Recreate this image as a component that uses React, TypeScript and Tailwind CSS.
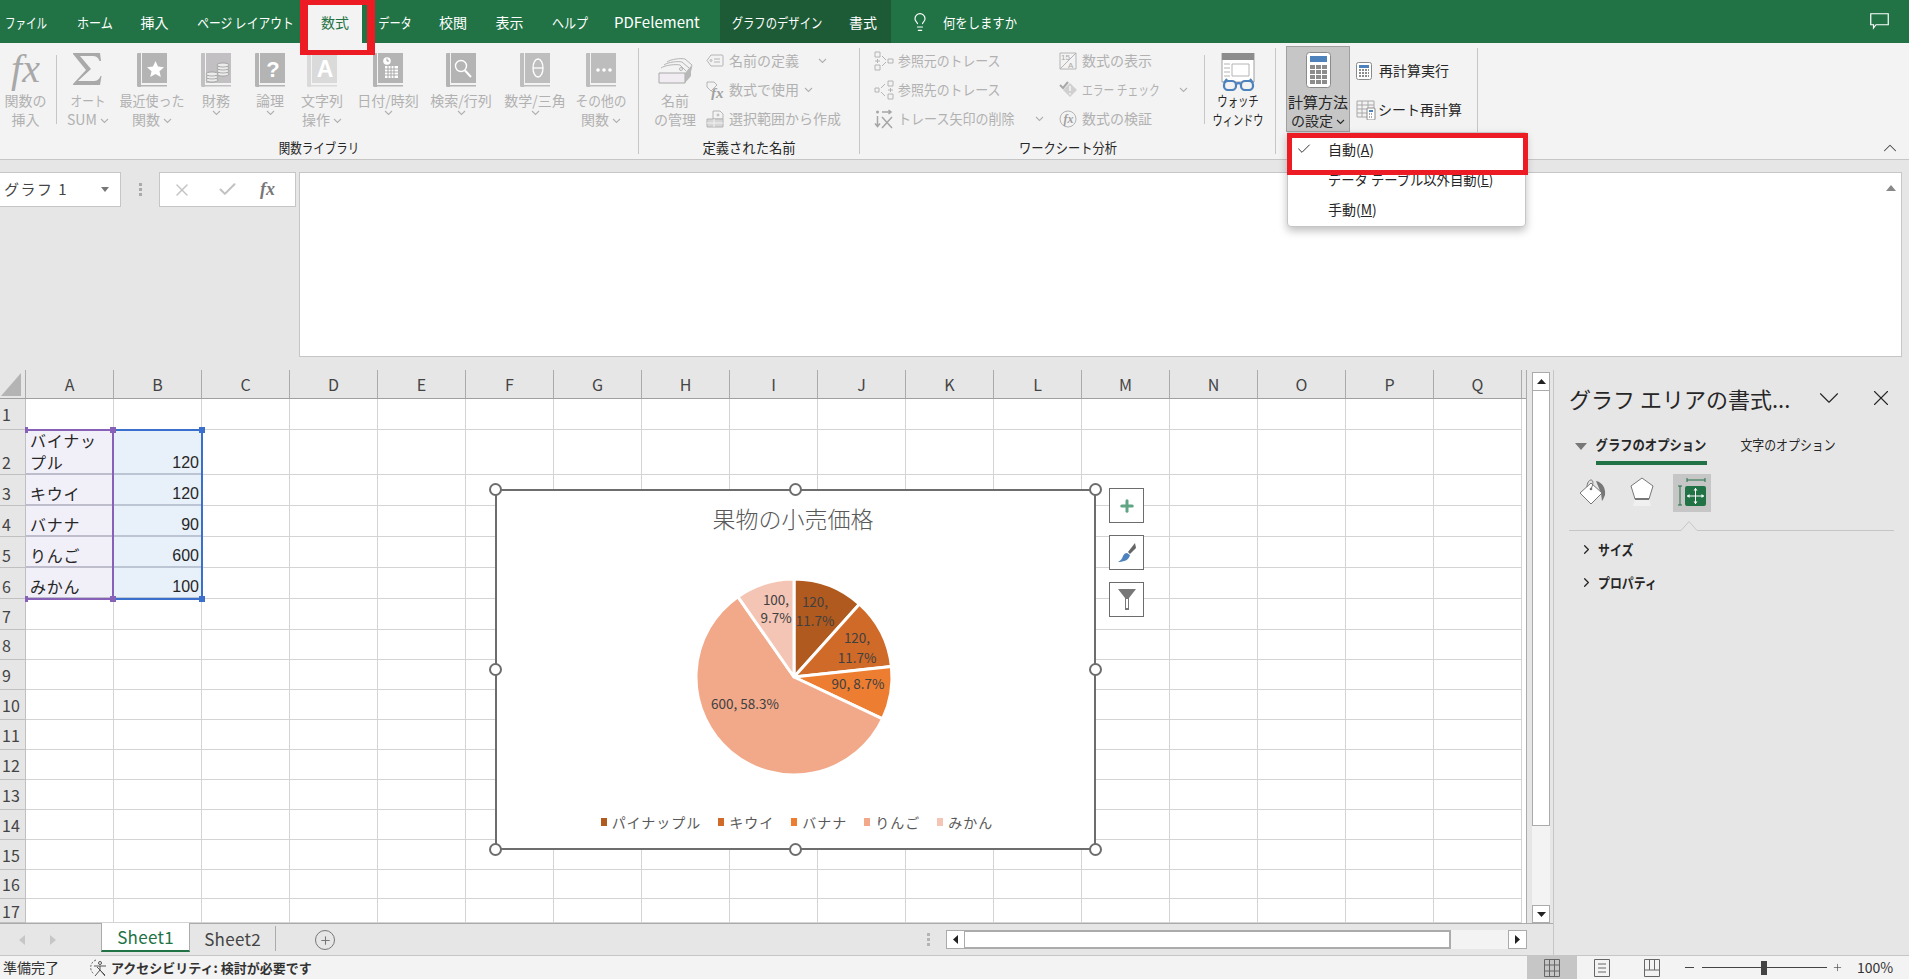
import { Check, ChevronDown, ChevronRight, ChevronUp, Lightbulb, Plus, X } from 'lucide-react';
import type { ReactNode } from 'react';

const MUTED = 'text-[#b1b1b1]';

// little chevron used under the ribbon buttons
function Chev({ className = '' }: { className?: string }) {
  return (
    <svg width="9" height="6" viewBox="0 0 9 6" className={`inline-block align-middle ${className}`}>
      <path d="M1 1l3.5 3.5L8 1" fill="none" stroke="currentColor" strokeWidth="1.1" />
    </svg>
  );
}

function N({ className = '', children }: { className?: string; children: ReactNode }) {
  return <span className={`inline-block whitespace-nowrap ${className}`}>{children}</span>;
}

function Book({ children, body = '#b4b4b4' }: { children?: ReactNode; body?: string }) {
  return (
    <svg width="31" height="34" viewBox="0 0 31 34">
      <path d="M0 31V1a1 1 0 0 1 1-1h3v34H2a2 2 0 0 1-2-3z" fill={body} />
      <rect x="5" y="0" width="25" height="30" fill={body} />
      <rect x="2" y="32" width="28" height="1.500" fill={body} />
      {children}
    </svg>
  );
}

const iconBooks: Record<string, ReactNode> = {
  star: (
    <Book>
      <path d="M18.500 8l2.500 5.600 6 .6-4.500 4 1.300 5.800-5.300-3-5.300 3 1.300-5.800-4.500-4 6-.6z" fill="#fff" />
    </Book>
  ),
  coins: (
    <Book body="#c2c0c2">
      <g fill="#ececec" stroke="#8f8f8f" strokeWidth="0.7">
        <ellipse cx="22" cy="21" rx="6" ry="2" />
        <ellipse cx="22" cy="18" rx="6" ry="2" />
        <ellipse cx="22" cy="15" rx="6" ry="2" />
        <ellipse cx="22" cy="12" rx="6" ry="2" />
        <ellipse cx="11" cy="27" rx="6" ry="2" />
        <ellipse cx="11" cy="24" rx="6" ry="2" />
        <ellipse cx="11" cy="21" rx="6" ry="2" />
      </g>
    </Book>
  ),
  question: (
    <Book>
      <text x="18" y="24" textAnchor="middle" fontSize="22" fontWeight="700" fill="#fff" fontFamily="Liberation Sans">?</text>
    </Book>
  ),
  letter: (
    <Book body="#dadada">
      <text x="18" y="24" textAnchor="middle" fontSize="23" fontWeight="700" fill="#fff" fontFamily="Liberation Sans">A</text>
    </Book>
  ),
  date: (
    <Book>
      <circle cx="14" cy="8" r="3.800" fill="#fff" />
      <path d="M14 5.500V8h2" stroke="#888" fill="none" strokeWidth="0.8" />
      <rect x="12" y="13" width="13" height="12" fill="#fff" />
      <path d="M12 16h13M12 19h13M12 22h13M15 13v12M18 13v12M21 13v12" stroke="#a0a0a0" strokeWidth="0.9" />
    </Book>
  ),
  search: (
    <Book>
      <circle cx="15" cy="13" r="5.500" fill="#b4b4b4" stroke="#fff" strokeWidth="1.400" />
      <path d="M19 17.500l6 6.500" stroke="#fff" strokeWidth="2" />
    </Book>
  ),
  theta: (
    <Book body="#bebebe">
      <ellipse cx="18" cy="15" rx="5" ry="9" fill="none" stroke="#fff" strokeWidth="1.300" />
      <path d="M13 15h10" stroke="#fff" strokeWidth="1.300" />
    </Book>
  ),
  more: (
    <Book body="#bdbdbd">
      <circle cx="12" cy="17" r="1.800" fill="#fff" />
      <circle cx="18" cy="17" r="1.800" fill="#fff" />
      <circle cx="24" cy="17" r="1.800" fill="#fff" />
    </Book>
  ),
};

function BigButton({ className, icon, children }: { className: string; icon: ReactNode; children: ReactNode }) {
  return (
    <div className={`flex flex-col items-center ${className}`}>
      <div className="flex h-[48px] justify-center pt-[10px]">{icon}</div>
      <div className={`flex flex-col items-center text-[14px] leading-[19px] ${MUTED}`}>{children}</div>
    </div>
  );
}

function SmallRow({ icon, iconClass, children }: { icon: ReactNode; iconClass: string; children: ReactNode }) {
  return (
    <div className={`flex h-[29px] items-center text-[14px] ${MUTED}`}>
      <div className={`flex shrink-0 items-center ${iconClass}`}>{icon}</div>
      {children}
    </div>
  );
}

function SmallGlyph({ children, w = 18 }: { children: ReactNode; w?: number }) {
  return (
    <svg width={w} height="20" viewBox={`0 0 ${w} 20`} fill="none" stroke="#b4b4b4" strokeWidth="1">
      {children}
    </svg>
  );
}

function GroupLabel({ children }: { children: ReactNode }) {
  return <div className="flex h-[18px] items-center justify-center text-[14px] text-[#262626]">{children}</div>;
}

function RibbonSep({ className = '' }: { className?: string }) {
  return <div className={`w-px shrink-0 bg-[#c6c6c6] ${className}`} />;
}

const GroupSep = () => <RibbonSep className="mt-[5px] h-[106px]" />;

const tabs = [
  { label: 'ファイル', box: 'ml-[5px] w-[42px]', scale: 'scale-x-[0.75]' },
  { label: 'ホーム', box: 'ml-[30px] w-[36px]', scale: 'scale-x-[0.86]' },
  { label: '挿入', box: 'ml-[27px] w-[29px]', scale: '' },
  { label: 'ページ レイアウト', box: 'ml-[28px] w-[97px]', scale: 'scale-x-[0.84]' },
];
const tabsAfter = [
  { label: 'データ', box: 'ml-[16px] w-[33px]', scale: 'scale-x-[0.8]' },
  { label: '校閲', box: 'ml-[28px] w-[28px]', scale: '' },
  { label: '表示', box: 'ml-[28px] w-[29px]', scale: '' },
  { label: 'ヘルプ', box: 'ml-[28px] w-[36px]', scale: 'scale-x-[0.86]' },
];

function TitleBar() {
  const tab = (t: { label: string; box: string; scale: string }) => (
    <div key={t.label} className={`mt-[2px] flex justify-center ${t.box}`}>
      <N className={t.scale}>{t.label}</N>
    </div>
  );
  return (
    <div className="flex h-[43px] items-center bg-[#217346] text-[14px] text-white">
      {tabs.map(tab)}
      <div className="ml-[14px] mt-[5px] flex h-[38px] w-[54px] items-center justify-center bg-[#f3f3f3] pb-[3px] text-[#217346]">
        数式
      </div>
      {tabsAfter.map(tab)}
      <div className="ml-[26px] mt-[2px] w-[89px] text-[15px]">PDFelement</div>
      <div className="ml-[17px] flex h-full w-[171px] items-center bg-[#1d5b36] pl-[11px] pt-[2px]">
        <div className="flex w-[91px] justify-center">
          <N className="scale-x-[0.81]">グラフのデザイン</N>
        </div>
        <div className="ml-[27px]">書式</div>
      </div>
      <Lightbulb size={20} strokeWidth={1.4} className="ml-[19px]" />
      <div className="ml-[13px] mt-[2px] flex w-[74px] justify-center">
        <N className="scale-x-[0.88]">何をしますか</N>
      </div>
      <svg width="19" height="17" viewBox="0 0 19 17" fill="none" className="ml-auto mr-[20px]">
        <path d="M.75.75h17.500v11H6L3.500 15v-3.250H.75z" stroke="#fff" strokeWidth="1.200" />
      </svg>
    </div>
  );
}

function Ribbon() {
  return (
    <div className="flex h-[117px] border-b border-[#c6c6c6] bg-[#f3f3f3]">
      {/* 関数ライブラリ */}
      <div className="flex w-[638px] shrink-0 flex-col">
        <div className="flex h-[95px]">
          <BigButton
            className="w-[51px]"
            icon={<span className="font-['Liberation_Serif',serif] text-[40px] italic leading-[32px] text-[#a8a8a8]">fx</span>}
          >
            <span>関数の</span>
            <span>挿入</span>
          </BigButton>
          <RibbonSep className="ml-[5px] mt-[12px] h-[69px]" />
          <BigButton
            className="w-[62px]"
            icon={
              <svg width="30" height="33" viewBox="0 0 30 33">
                <path d="M0 0h27l1 8h-1.500C25 4 23 3 19 3H7l11 13L5 28h15c4 0 6-1 7.500-5h1L27 32H0v-1l13-14L0 1z" fill="#a9a9a9" />
              </svg>
            }
          >
            <N className="scale-x-[0.83]">オート</N>
            <span>
              SUM <Chev />
            </span>
          </BigButton>
          <BigButton className="w-[66px]" icon={iconBooks.star}>
            <N className="scale-x-[0.93]">最近使った</N>
            <span>
              関数 <Chev />
            </span>
          </BigButton>
          <BigButton className="w-[62px]" icon={iconBooks.coins}>
            <span>財務</span>
            <Chev />
          </BigButton>
          <BigButton className="w-[46px]" icon={iconBooks.question}>
            <span>論理</span>
            <Chev />
          </BigButton>
          <BigButton className="w-[58px]" icon={iconBooks.letter}>
            <span>文字列</span>
            <span>
              操作 <Chev />
            </span>
          </BigButton>
          <BigButton className="w-[74px]" icon={iconBooks.date}>
            <span>日付/時刻</span>
            <Chev />
          </BigButton>
          <BigButton className="w-[72px]" icon={iconBooks.search}>
            <span>検索/行列</span>
            <Chev />
          </BigButton>
          <BigButton className="w-[76px]" icon={iconBooks.theta}>
            <span>数学/三角</span>
            <Chev />
          </BigButton>
          <BigButton className="w-[56px]" icon={iconBooks.more}>
            <N className="scale-x-[0.91]">その他の</N>
            <span>
              関数 <Chev />
            </span>
          </BigButton>
        </div>
        <GroupLabel>
          <N className="scale-x-[0.82]">関数ライブラリ</N>
        </GroupLabel>
      </div>
      <GroupSep />

      {/* 定義された名前 */}
      <div className="flex w-[220px] shrink-0 flex-col">
        <div className="flex h-[95px]">
          <BigButton
            className="ml-[5px] w-[62px]"
            icon={
              <svg width="35" height="26" viewBox="0 0 35 26" fill="none" stroke="#b4b4b4" className="mt-[5px]">
                <path d="M9 4c4-3 14-4 18-3l7 6-2 9" />
                <path d="M6 7c4-3 14-4 18-3l7 6" />
                <path d="M3 10c4-3 15-4 19-3l6 6" />
                <circle cx="23" cy="11" r="1.500" />
                <path d="M1 15h26v10H1z" fill="#f0ecf2" stroke="#a8a8a8" />
                <path d="M27 15l6-7v10l-6 7z" fill="#b8b8b8" stroke="none" />
              </svg>
            }
          >
            <span>名前</span>
            <span>の管理</span>
          </BigButton>
          <div className="flex flex-col pt-[3px]">
            <SmallRow
              iconClass="w-[23px]"
              icon={
                <SmallGlyph>
                  <path d="M5 4h11a1 1 0 0 1 1 1v9a1 1 0 0 1-1 1H5L1 9.500z" />
                  <circle cx="5" cy="9.500" r="1" />
                  <path d="M8 8h6M8 11h6" />
                </SmallGlyph>
              }
            >
              <span>名前の定義</span>
              <Chev className="ml-[19px]" />
            </SmallRow>
            <SmallRow
              iconClass="w-[23px]"
              icon={
                <SmallGlyph>
                  <path d="M1 2h7l3 3-6 6-4-4z" />
                  <text x="5" y="18" fontSize="15" fontStyle="italic" fontWeight="700" fill="#a0a0a0" stroke="none" fontFamily="Liberation Serif">fx</text>
                </SmallGlyph>
              }
            >
              <span>数式で使用</span>
              <Chev className="ml-[5px]" />
            </SmallRow>
            <SmallRow
              iconClass="w-[23px]"
              icon={
                <SmallGlyph>
                  <path d="M7 2h7l3 3v5H7z" />
                  <circle cx="12" cy="6" r="1" />
                  <path d="M1 10h16v8H1z" fill="#d6d6d6" />
                  <path d="M8 10v8M1 14h16" stroke="#f3f3f3" />
                </SmallGlyph>
              }
            >
              <span>選択範囲から作成</span>
            </SmallRow>
          </div>
        </div>
        <GroupLabel>
          <N className="scale-x-[0.95]">定義された名前</N>
        </GroupLabel>
      </div>
      <GroupSep />

      {/* ワークシート分析 */}
      <div className="flex w-[415px] shrink-0 flex-col">
        <div className="flex h-[95px]">
          <div className="ml-[14px] flex w-[185px] flex-col pt-[3px]">
            <SmallRow
              iconClass="w-[24px]"
              icon={
                <SmallGlyph w={20}>
                  <path d="M1 1h5v5H1zM1 14h5v5H1zM1 10h5M3.500 8v4M14 8h5v4h-5zM8 5l4 4M8 15l4-4" />
                </SmallGlyph>
              }
            >
              <N className="origin-left scale-x-[0.92]">参照元のトレース</N>
            </SmallRow>
            <SmallRow
              iconClass="w-[24px]"
              icon={
                <SmallGlyph w={20}>
                  <path d="M1 8h4v4H1zM14 1h5v5h-5zM14 14h5v5h-5zM14 10h5M16.500 8v4M7 8l4-4M7 12l4 4" />
                </SmallGlyph>
              }
            >
              <N className="origin-left scale-x-[0.92]">参照先のトレース</N>
            </SmallRow>
            <SmallRow
              iconClass="w-[24px]"
              icon={
                <svg width="20" height="20" viewBox="0 0 20 20" fill="none" stroke="#a6a6a6" strokeWidth="1.500">
                  <circle cx="3.500" cy="3" r="1.500" fill="#a6a6a6" stroke="none" />
                  <path d="M3.500 7v10M1 14.500l2.500 3 2.500-3M8 3h9M14.500 1l2.500 2-2.500 2M8 8l10 11M18 8L8 19" />
                </svg>
              }
            >
              <N className="origin-left scale-x-[0.93]">トレース矢印の削除</N>
              <Chev className="ml-[12px]" />
            </SmallRow>
          </div>
          <div className="flex w-[145px] flex-col pt-[3px]">
            <SmallRow
              iconClass="w-[23px]"
              icon={
                <SmallGlyph>
                  <path d="M1 2h16v16H1zM1 18L17 2" />
                  <text x="2" y="9" fontSize="8" fill="#a8a8a8" stroke="none" fontFamily="Liberation Sans">15</text>
                  <text x="9" y="17" fontSize="8" fill="#a8a8a8" stroke="none" fontFamily="Liberation Sans">A</text>
                </SmallGlyph>
              }
            >
              <span>数式の表示</span>
            </SmallRow>
            <SmallRow
              iconClass="w-[23px]"
              icon={
                <SmallGlyph>
                  <path d="M1 5l3 3 5-6" stroke="#a8a8a8" strokeWidth="2" />
                  <path d="M11 3l7 7-7 7-7-7z" fill="#d0d0d0" stroke="none" />
                  <path d="M11 6v5M11 13v1.500" stroke="#f3f3f3" strokeWidth="1.600" />
                </SmallGlyph>
              }
            >
              <N className="w-[78px] origin-left scale-x-[0.77]">エラー チェック</N>
              <Chev className="ml-[19px]" />
            </SmallRow>
            <SmallRow
              iconClass="w-[23px]"
              icon={
                <SmallGlyph>
                  <circle cx="9" cy="10" r="8" />
                  <text x="4.500" y="14" fontSize="12" fontStyle="italic" fontWeight="700" fill="#a0a0a0" stroke="none" fontFamily="Liberation Serif">fx</text>
                </SmallGlyph>
              }
            >
              <span>数式の検証</span>
            </SmallRow>
          </div>
          <RibbonSep className="mt-[12px] h-[69px]" />
          <div className="ml-[7px] flex w-[52px] flex-col items-center">
            <div className="flex h-[48px] justify-center pt-[10px]">
              <svg width="35" height="38" viewBox="0 0 35 38">
                <path d="M1 0h32v29H1z" fill="#fff" stroke="#a0a0a0" />
                <path d="M1 0h32v7H1z" fill="#8c8c8c" />
                <path d="M3 11h6M3 15h6M3 19h6M3 23h6" stroke="#b4b4b4" />
                <path d="M11 11h17v12H11z" fill="none" stroke="#b4b4b4" />
                <g fill="#f3f3f3" stroke="#4d82bd" strokeWidth="2.200">
                  <rect x="3" y="28" width="12" height="9" rx="4" />
                  <rect x="20" y="28" width="12" height="9" rx="4" />
                  <path d="M15 31c2-1.500 3-1.500 5 0M3 30l3-4M32 30l-3-4" fill="none" />
                </g>
              </svg>
            </div>
            <div className="flex flex-col items-center text-[14px] leading-[19px] text-[#262626]">
              <N className="scale-x-[0.74]">ウォッチ</N>
              <N className="scale-x-[0.73]">ウィンドウ</N>
            </div>
          </div>
        </div>
        <GroupLabel>
          <N className="scale-x-[0.875]">ワークシート分析</N>
        </GroupLabel>
      </div>
      <GroupSep />

      {/* 計算方法 */}
      <div className="flex w-[201px] shrink-0">
        <div className="ml-[10px] mt-[3px] flex h-[86px] w-[64px] flex-col items-center border border-[#a0a0a0] bg-[#c6c6c6] text-[14px] leading-[18px] text-[#262626]">
          <div className="flex h-[46px] justify-center pt-[5px]">
            <svg width="25" height="36" viewBox="0 0 25 36">
              <rect x="0.500" y="0.500" width="24" height="35" rx="3" fill="#fff" stroke="#8a8a8a" />
              <rect x="4" y="4" width="17" height="6" fill="#4d82bd" />
              <g fill="#8c8c8c">
                {[13, 18, 23, 28].map((y) => (
                  <g key={y}>
                    <rect x="4" y={y} width="5" height="4" />
                    <rect x="10" y={y} width="5" height="4" />
                    <rect x="16" y={y} width="5" height="4" />
                  </g>
                ))}
              </g>
            </svg>
          </div>
          <span className="whitespace-nowrap text-[15px]">計算方法</span>
          <span className="whitespace-nowrap">
            の設定 <Chev />
          </span>
        </div>
        <div className="ml-[6px] flex flex-col pt-[8px] text-[14px] text-[#262626]">
          <div className="flex h-[39px] items-center">
            <div className="w-[23px]">
              <svg width="16" height="18" viewBox="0 0 16 18">
                <rect x="0.500" y="0.500" width="15" height="17" rx="2" fill="#fff" stroke="#8a8a8a" />
                <rect x="3" y="3" width="10" height="3" fill="#4d82bd" />
                <path d="M3 8h10M3 11h10M3 14h10" stroke="#8c8c8c" strokeWidth="2" strokeDasharray="2 1" />
              </svg>
            </div>
            <span>再計算実行</span>
          </div>
          <div className="flex h-[39px] items-center">
            <div className="w-[23px]">
              <svg width="20" height="20" viewBox="0 0 20 20" fill="none">
                <path d="M1 1h17v16H1zM1 5h17M1 9h12M1 13h10M6 1v16M12 1v8" stroke="#a8a8a8" />
                <rect x="11" y="8" width="8" height="12" rx="1" fill="#fff" stroke="#8a8a8a" />
                <rect x="13" y="10" width="4" height="2" fill="#4d82bd" />
                <path d="M13 14h4M13 17h4" stroke="#8c8c8c" strokeWidth="1.500" strokeDasharray="1 1" />
              </svg>
            </div>
            <span className="-ml-[1px]">シート再計算</span>
          </div>
        </div>
      </div>
      <GroupSep />

      <div className="flex flex-1 items-end justify-end pb-[0px] pr-[8px]">
        <ChevronUp size={22} strokeWidth={1.1} className="text-[#444]" />
      </div>
    </div>
  );
}

function FormulaBar() {
  return (
    <div className="flex h-[210px] items-start bg-[#e6e6e6] pt-[12px]">
      <div className="flex h-[35px] w-[121px] items-center justify-between border border-l-0 border-[#c6c6c6] bg-white pl-[4px] pr-[11px] text-[15px] tracking-[1.5px] text-[#444]">
        <span>グラフ 1</span>
        <svg width="8" height="5" viewBox="0 0 8 5">
          <path d="M0 0h8L4 5z" fill="#777" />
        </svg>
      </div>
      <div className="flex h-[35px] w-[38px] flex-col items-center justify-center gap-[2px]">
        <span className="h-[3px] w-[3px] bg-[#aaa]" />
        <span className="h-[3px] w-[3px] bg-[#aaa]" />
        <span className="h-[3px] w-[3px] bg-[#aaa]" />
      </div>
      <div className="flex h-[35px] w-[137px] items-center border border-[#c6c6c6] bg-white">
        <X size={20} strokeWidth={1.6} className="ml-[12px] text-[#c2c2c2]" />
        <Check size={21} strokeWidth={2.4} className="ml-[25px] text-[#c2c2c2]" />
        <span className="ml-[22px] font-['Liberation_Serif',serif] text-[18px] font-bold italic text-[#777]">fx</span>
      </div>
      <div className="ml-[3px] mr-[7px] flex h-[185px] flex-1 justify-end border border-[#c6c6c6] bg-white pr-[5px] pt-[12px]">
        <svg width="10" height="6" viewBox="0 0 10 6">
          <path d="M5 0l5 6H0z" fill="#888" />
        </svg>
      </div>
    </div>
  );
}

const columns = ['A', 'B', 'C', 'D', 'E', 'F', 'G', 'H', 'I', 'J', 'K', 'L', 'M', 'N', 'O', 'P', 'Q'];

const rows = [
  { n: 1, h: 'h-[31px]', lab: 'items-center' },
  { n: 2, h: 'h-[45px]', lab: 'items-end pb-[1px]', a: ['バイナッ', 'プル'], b: '120' },
  { n: 3, h: 'h-[31px]', lab: 'items-end pb-[1px]', a: ['キウイ'], b: '120' },
  { n: 4, h: 'h-[31px]', lab: 'items-end pb-[1px]', a: ['バナナ'], b: '90' },
  { n: 5, h: 'h-[31px]', lab: 'items-end pb-[1px]', a: ['りんご'], b: '600' },
  { n: 6, h: 'h-[31px]', lab: 'items-end pb-[1px]', a: ['みかん'], b: '100' },
  { n: 7, h: 'h-[31px]', lab: 'items-end pb-[2px]' },
  { n: 8, h: 'h-[30px]', lab: 'items-center' },
  { n: 9, h: 'h-[30px]', lab: 'items-center' },
  { n: 10, h: 'h-[30px]', lab: 'items-center' },
  { n: 11, h: 'h-[30px]', lab: 'items-center' },
  { n: 12, h: 'h-[30px]', lab: 'items-center' },
  { n: 13, h: 'h-[30px]', lab: 'items-center' },
  { n: 14, h: 'h-[30px]', lab: 'items-center' },
  { n: 15, h: 'h-[30px]', lab: 'items-center' },
  { n: 16, h: 'h-[29px]', lab: 'items-center' },
  { n: 17, h: 'h-[24px]', lab: 'items-start pt-[1px]' },
];

function Grid() {
  return (
    <div className="relative w-[1527px] overflow-hidden border-r border-[#ababab] bg-white text-[16px] leading-[22px] text-[#262626]">
      <div className="flex h-[29px] border-b border-[#a0a0a0] bg-[#e6e6e6]">
        <div className="relative w-[26px] shrink-0 border-r border-[#ababab]">
          <svg width="22" height="24" viewBox="0 0 22 24" className="absolute left-0 top-[3px]">
            <path d="M21 0v23H1z" fill="#b4b4b4" />
          </svg>
        </div>
        {columns.map((c) => (
          <div key={c} className="flex w-[88px] shrink-0 items-center justify-center border-r border-[#ababab] text-[#444]">
            {c}
          </div>
        ))}
      </div>
      {rows.map((r) => (
        <div key={r.n} className={`flex ${r.h}`}>
          <div className={`flex w-[26px] shrink-0 border-b border-r border-[#c0c0c0] bg-[#e6e6e6] pl-[2px] text-[#444] ${r.lab}`}>
            {r.n}
          </div>
          {columns.map((c) => {
            if (c === 'A' && r.a) {
              return (
                <div key={c} className="flex w-[88px] shrink-0 flex-col justify-end border-b-2 border-[#bdbdcb] bg-[#f1eff8] pl-[4px] tracking-[0.8px]">
                  {r.a.map((line) => (
                    <span key={line}>{line}</span>
                  ))}
                </div>
              );
            }
            if (c === 'B' && r.b) {
              return (
                <div key={c} className="flex w-[88px] shrink-0 items-end justify-end border-b-2 border-[#bcc5d3] bg-[#e8f0f9] pr-[3px] font-['Liberation_Sans',sans-serif]">
                  <span className="translate-y-[1px]">{r.b}</span>
                </div>
              );
            }
            return <div key={c} className="w-[88px] shrink-0 border-b border-r border-[#d4d4d4]" />;
          })}
        </div>
      ))}

      {/* selection ranges of the chart source */}
      <div className="absolute left-[26px] top-[59px] h-[171px] w-[88px] border-y-2 border-r-2 border-[#8760b8]">
        <span className="absolute -left-[1px] -top-[4px] h-[6px] w-[3px] bg-[#8760b8]" />
        <span className="absolute -left-[1px] -bottom-[4px] h-[6px] w-[3px] bg-[#8760b8]" />
      </div>
      <div className="absolute left-[114px] top-[59px] h-[171px] w-[89px] border-y-2 border-r-2 border-[#3a6fcc]">
        <span className="absolute -right-[4px] -top-[4px] h-[6px] w-[6px] bg-[#3a6fcc]" />
        <span className="absolute -right-[4px] -bottom-[4px] h-[6px] w-[6px] bg-[#3a6fcc]" />
      </div>
      <span className="absolute left-[110px] top-[57px] h-[6px] w-[6px] bg-[#8760b8]" />
      <span className="absolute left-[110px] top-[226px] h-[6px] w-[6px] bg-[#8760b8]" />

      <Chart />
    </div>
  );
}

const slices = [
  { v: 120, color: '#b05a1f' },
  { v: 120, color: '#d06a28' },
  { v: 90, color: '#ed7d31' },
  { v: 600, color: '#f1a98a' },
  { v: 100, color: '#f4c5b5' },
];
const legend = [
  { label: 'パイナップル', bg: 'bg-[#b05a1f]' },
  { label: 'キウイ', bg: 'bg-[#d06a28]' },
  { label: 'バナナ', bg: 'bg-[#ed7d31]' },
  { label: 'りんご', bg: 'bg-[#f1a98a]' },
  { label: 'みかん', bg: 'bg-[#f4c5b5]' },
];

function piePaths(cx: number, cy: number, r: number) {
  const total = slices.reduce((s, x) => s + x.v, 0);
  let angle = 0;
  return slices.map((s) => {
    const from = angle;
    angle += (s.v / total) * Math.PI * 2;
    const x0 = cx + r * Math.sin(from);
    const y0 = cy - r * Math.cos(from);
    const x1 = cx + r * Math.sin(angle);
    const y1 = cy - r * Math.cos(angle);
    const large = angle - from > Math.PI ? 1 : 0;
    return { color: s.color, d: `M${cx} ${cy}L${x0} ${y0}A${r} ${r} 0 ${large} 1 ${x1} ${y1}Z` };
  });
}

function Handle({ className }: { className: string }) {
  return <span className={`absolute h-[13px] w-[13px] rounded-full border-2 border-[#6d6d6d] bg-white ${className}`} />;
}

function SideButton({ className, children }: { className: string; children: ReactNode }) {
  return (
    <div className={`absolute left-[612px] flex h-[35px] w-[35px] items-center justify-center border border-[#6d6d6d] bg-white ${className}`}>
      {children}
    </div>
  );
}

function Chart() {
  const labels = [
    { x: 319, y: 67, t: '120,' },
    { x: 319, y: 86, t: '11.7%' },
    { x: 361, y: 103, t: '120,' },
    { x: 361, y: 123, t: '11.7%' },
    { x: 362, y: 149, t: '90, 8.7%' },
    { x: 249, y: 169, t: '600, 58.3%' },
    { x: 280, y: 65, t: '100,' },
    { x: 280, y: 83, t: '9.7%' },
  ];
  return (
    <div className="absolute left-[495px] top-[119px] h-[361px] w-[601px] border-2 border-[#6d6d6d] bg-white">
      <div className="flex h-[44px] items-end justify-center pb-[3px] pr-[5px] text-[23px] font-light leading-[28px] text-[#595959]">
        果物の小売価格
      </div>
      <svg width="597" height="268" viewBox="0 0 597 268" className="block">
        {piePaths(297, 142, 98).map((p) => (
          <path key={p.d} d={p.d} fill={p.color} stroke="#fff" strokeWidth="3" strokeLinejoin="round" />
        ))}
        {labels.map((l) => (
          <text key={`${l.x}-${l.y}`} x={l.x - 1} y={l.y + 5} textAnchor="middle" fontSize="13.500" fill="#404040">
            {l.t}
          </text>
        ))}
      </svg>
      <div className="flex h-[38px] items-center justify-center gap-[17px] pl-[3px] text-[14px] tracking-[1px] text-[#595959]">
        {legend.map((l) => (
          <div key={l.label} className="flex items-center gap-[5px]">
            <span className={`h-[8px] w-[6px] ${l.bg}`} />
            <span>{l.label}</span>
          </div>
        ))}
      </div>

      <Handle className="-left-[8px] -top-[8px]" />
      <Handle className="left-[292px] -top-[8px]" />
      <Handle className="-right-[8px] -top-[8px]" />
      <Handle className="-left-[8px] top-[172px]" />
      <Handle className="-right-[8px] top-[172px]" />
      <Handle className="-left-[8px] -bottom-[8px]" />
      <Handle className="left-[292px] -bottom-[8px]" />
      <Handle className="-right-[8px] -bottom-[8px]" />

      <SideButton className="-top-[3px]">
        <Plus size={18} strokeWidth={4} className="text-[#5fa584]" />
      </SideButton>
      <SideButton className="top-[44px]">
        <svg width="20" height="22" viewBox="0 0 20 22">
          <path d="M18 1l-7 9 2 2 6-6z" fill="#666" />
          <path d="M10 11l3 2c-1 5-6 7-12 7 3-2 4-3 5-6 1-2 2-3 4-3z" fill="#4d82bd" />
        </svg>
      </SideButton>
      <SideButton className="top-[91px]">
        <svg width="18" height="21" viewBox="0 0 18 21">
          <path d="M0 0h18l-7 9v12H7V9z" fill="#777" />
          <path d="M8 10h2v9H8z" fill="#fff" />
        </svg>
      </SideButton>
    </div>
  );
}

function VerticalScrollbar() {
  return (
    <div className="flex w-[26px] flex-col items-start bg-[#e6e6e6] pl-[5px]">
      <div className="mt-[2px] flex h-[19px] w-[18px] items-center justify-center border border-[#ababab] bg-white">
        <svg width="9" height="5" viewBox="0 0 9 5">
          <path d="M4.500 0L9 5H0z" fill="#222" />
        </svg>
      </div>
      <div className="h-[435px] w-[18px] border-x border-b border-[#ababab] bg-white" />
      <div className="h-[79px] w-[18px] bg-[#f3f3f3]" />
      <div className="flex h-[18px] w-[18px] items-center justify-center border border-[#ababab] bg-white">
        <svg width="9" height="5" viewBox="0 0 9 5">
          <path d="M4.500 5L9 0H0z" fill="#222" />
        </svg>
      </div>
    </div>
  );
}

function SheetTabs() {
  return (
    <div className="flex h-[32px] border-t border-[#ababab] bg-[#e6e6e6] text-[17px] tracking-[0.3px] text-[#444]">
      <div className="flex w-[101px] items-center pl-[19px] text-[#c6c6c6]">
        <svg width="6" height="10" viewBox="0 0 6 10">
          <path d="M6 0v10L0 5z" fill="currentColor" />
        </svg>
        <svg width="6" height="10" viewBox="0 0 6 10" className="ml-[25px]">
          <path d="M0 0v10l6-5z" fill="currentColor" />
        </svg>
      </div>
      <div className="-mt-px flex h-[29px] w-[89px] items-center justify-center border-x border-b-2 border-x-[#ababab] border-b-[#217346] bg-white text-[#217346]">
        Sheet1
      </div>
      <div className="mt-[2px] flex h-[25px] w-[86px] items-center justify-center border-r border-[#ababab]">Sheet2</div>
      <div className="ml-[39px] mt-[6px] flex h-[20px] w-[20px] items-center justify-center rounded-full border-[1.5px] border-[#777]">
        <Plus size={13} strokeWidth={2} className="text-[#777]" />
      </div>
      <div className="ml-[592px] flex flex-col justify-center gap-[2px]">
        <span className="h-[3px] w-[3px] bg-[#b4b4b4]" />
        <span className="h-[3px] w-[3px] bg-[#b4b4b4]" />
        <span className="h-[3px] w-[3px] bg-[#b4b4b4]" />
      </div>
      <div className="ml-[16px] mt-[6px] flex h-[19px] w-[581px]">
        <div className="flex w-[19px] items-center justify-center border border-[#ababab] bg-white">
          <svg width="5" height="9" viewBox="0 0 5 9">
            <path d="M5 0v9L0 4.500z" fill="#222" />
          </svg>
        </div>
        <div className="w-[486px] border-y-2 border-r-2 border-[#ababab] bg-white" />
        <div className="flex-1 bg-[#f3f3f3]" />
        <div className="flex w-[19px] items-center justify-center border border-[#ababab] bg-white">
          <svg width="5" height="9" viewBox="0 0 5 9">
            <path d="M0 0v9l5-4.500z" fill="#222" />
          </svg>
        </div>
      </div>
    </div>
  );
}

function FormatPane() {
  return (
    <div className="flex-1 border-l border-[#c6c6c6] bg-[#e6e6e6] text-[#262626]">
      <div className="flex h-[58px] items-start pl-[15px] pt-[11px]">
        <span className="w-[243px] whitespace-nowrap text-[22px] leading-[34px]">グラフ エリアの書式...</span>
        <ChevronDown size={34} strokeWidth={0.8} />
        <X size={26} strokeWidth={1.050} className="ml-[22px] mt-[4px]" />
      </div>
      <div className="flex h-[37px] items-start pl-[21px]">
        <svg width="12" height="7" viewBox="0 0 12 7" className="mt-[15px]">
          <path d="M0 0h12L6 7z" fill="#777" />
        </svg>
        <div className="ml-[9px] flex h-[37px] w-[111px] items-center justify-center border-b-4 border-[#217346]">
          <N className="-ml-[2px] scale-x-[0.88] text-[14px] font-bold">グラフのオプション</N>
        </div>
        <div className="ml-[33px] flex h-[33px] w-[95px] items-center justify-center">
          <N className="scale-x-[0.85] text-[14px]">文字のオプション</N>
        </div>
      </div>
      <div className="flex h-[47px] items-end pl-[24px]">
        <svg width="28" height="28" viewBox="0 0 28 28" className="mb-[6px]">
          <path d="M18 3c6 1 10 7 9 14-1 2-2 5-3 6l-1-8z" fill="#777" />
          <path d="M13 5L24 15 13 26 2 15z" fill="#fff" stroke="#777" />
          <path d="M9 9c0-4 2-7 4-7s3 3 0 9" fill="none" stroke="#777" />
          <circle cx="13" cy="11" r="1.300" fill="#777" />
        </svg>
        <svg width="26" height="29" viewBox="0 0 26 29" className="mb-[6px] ml-[23px]">
          <path d="M6 22l-2 7h18l-2-7z" fill="#f0f0f0" />
          <path d="M13 1l11 8-4 13H6L2 9z" fill="#fff" stroke="#777" />
          <path d="M6 22h14" stroke="#777" strokeWidth="2" />
        </svg>
        <div className="ml-[18px] flex h-[38px] w-[38px] items-center justify-center bg-[#c6c6c6]">
          <svg width="28" height="30" viewBox="0 0 28 30">
            <path d="M9 2h18M9 0v4M27 0v4" stroke="#217346" fill="none" />
            <path d="M0 8h4M2 8v19M0 27h4" stroke="#217346" fill="none" />
            <rect x="7" y="8" width="21" height="20" rx="2" fill="#217346" />
            <path d="M9 18h17M17.500 10v16" stroke="#fff" />
            <path d="M17.500 10l-2 2.500h4zM17.500 26l-2-2.500h4zM9 18l2.500-2v4zM26 18l-2.500-2v4z" fill="#fff" />
          </svg>
        </div>
      </div>
      {/* divider with the little notch under the selected icon */}
      <svg width="325" height="11" viewBox="0 0 325 11" className="ml-[15px] mt-[8px] block">
        <path d="M0 10.500h112l8-9 8 9h197" fill="none" stroke="#c6c6c6" />
      </svg>
      <div className="mt-[2px] flex h-[33px] items-center pl-[25px]">
        <ChevronRight size={15} strokeWidth={2} />
        <N className="ml-[4px] origin-left scale-x-[0.85] text-[14px] font-bold">サイズ</N>
      </div>
      <div className="flex h-[33px] items-center pl-[25px]">
        <ChevronRight size={15} strokeWidth={2} />
        <N className="ml-[4px] origin-left scale-x-[0.85] text-[14px] font-bold">プロパティ</N>
      </div>
    </div>
  );
}

function StatusBar() {
  return (
    <div className="flex h-[24px] items-center border-t border-[#c6c6c6] bg-[#f3f3f3] text-[14px] text-[#333]">
      <span className="ml-[3px] w-[86px]">準備完了</span>
      <svg width="18" height="19" viewBox="0 0 18 19" fill="none" stroke="#555">
        <path d="M7 2a8 8 0 0 0-2 14" strokeDasharray="2 1.500" />
        <circle cx="11" cy="5" r="1.500" />
        <path d="M5 8h12M11 8v4M6 18l5-6 5 6M8 9l8 8" />
      </svg>
      <N className="ml-[4px] w-[203px] text-[13px] font-bold">アクセシビリティ: 検討が必要です</N>
      <div className="ml-[1213px] flex h-full w-[50px] items-center justify-center bg-[#c6c6c6]">
        <svg width="16" height="18" viewBox="0 0 16 18" fill="none" stroke="#666">
          <path d="M.5.5h15v17H.500zM.5 6h15M.5 12h15M5.500.5v17M10.500.5v17" />
        </svg>
      </div>
      <div className="flex w-[49px] justify-center">
        <svg width="16" height="18" viewBox="0 0 16 18" fill="none" stroke="#666">
          <path d="M.5.5h15v17H.500zM4 5h8M4 9h8M4 13h8" />
        </svg>
      </div>
      <div className="flex w-[51px] justify-center">
        <svg width="16" height="18" viewBox="0 0 16 18" fill="none" stroke="#666">
          <path d="M.5.5h15v17H.500zM.5 11h15M5.500.5V11M10.500.5V11" />
        </svg>
      </div>
      <span className="ml-[8px] h-px w-[9px] bg-[#444]" />
      <div className="relative ml-[8px] flex h-[16px] w-[125px] items-center">
        <div className="h-px w-full bg-[#444]" />
        <span className="absolute left-[59px] top-[1px] h-[14px] w-[6px] bg-[#444]" />
      </div>
      <Plus size={11} strokeWidth={1.4} className="ml-[5px] text-[#444]" />
      <span className="ml-[14px] text-[14px]">100%</span>
    </div>
  );
}

export default function App() {
  return (
    <div className="relative h-[979px] w-[1909px] overflow-hidden bg-[#e6e6e6] font-['Noto_Sans_CJK_JP','Noto_Sans',sans-serif]">
      <TitleBar />
      <Ribbon />
      <FormulaBar />
      <div className="flex h-[585px]">
        <div className="flex w-[1553px] flex-col">
          <div className="flex h-[553px]">
            <Grid />
            <VerticalScrollbar />
          </div>
          <SheetTabs />
        </div>
        <FormatPane />
      </div>
      <StatusBar />

      {/* open 計算方法 dropdown */}
      <div className="absolute left-[1287px] top-[132px] flex h-[95px] w-[239px] flex-col rounded-b-[4px] border border-[#c6c6c6] bg-white pt-[1px] text-[14px] text-[#262626] shadow-[0_4px_8px_rgba(0,0,0,0.25)]">
        <div className="flex h-[30px] items-center">
          <Check size={16} strokeWidth={1.4} className="ml-[8px] mr-[16px]" />
          <span>
            自動(<u>A</u>)
          </span>
        </div>
        <div className="flex h-[30px] items-center pl-[40px]">
          <N className="origin-left scale-x-[0.95]">
            データ テーブル以外自動(<u>E</u>)
          </N>
        </div>
        <div className="flex h-[30px] items-center pl-[40px]">
          <span>
            手動(<u>M</u>)
          </span>
        </div>
      </div>

      {/* annotation boxes of the screenshot */}
      <div className="absolute left-[300px] top-0 h-[55px] w-[75px] border-x-[8px] border-y-[5px] border-[#ed1c24]" />
      <div className="absolute left-[1287px] top-[133px] h-[42px] w-[241px] border-[5px] border-[#ed1c24]" />
    </div>
  );
}
